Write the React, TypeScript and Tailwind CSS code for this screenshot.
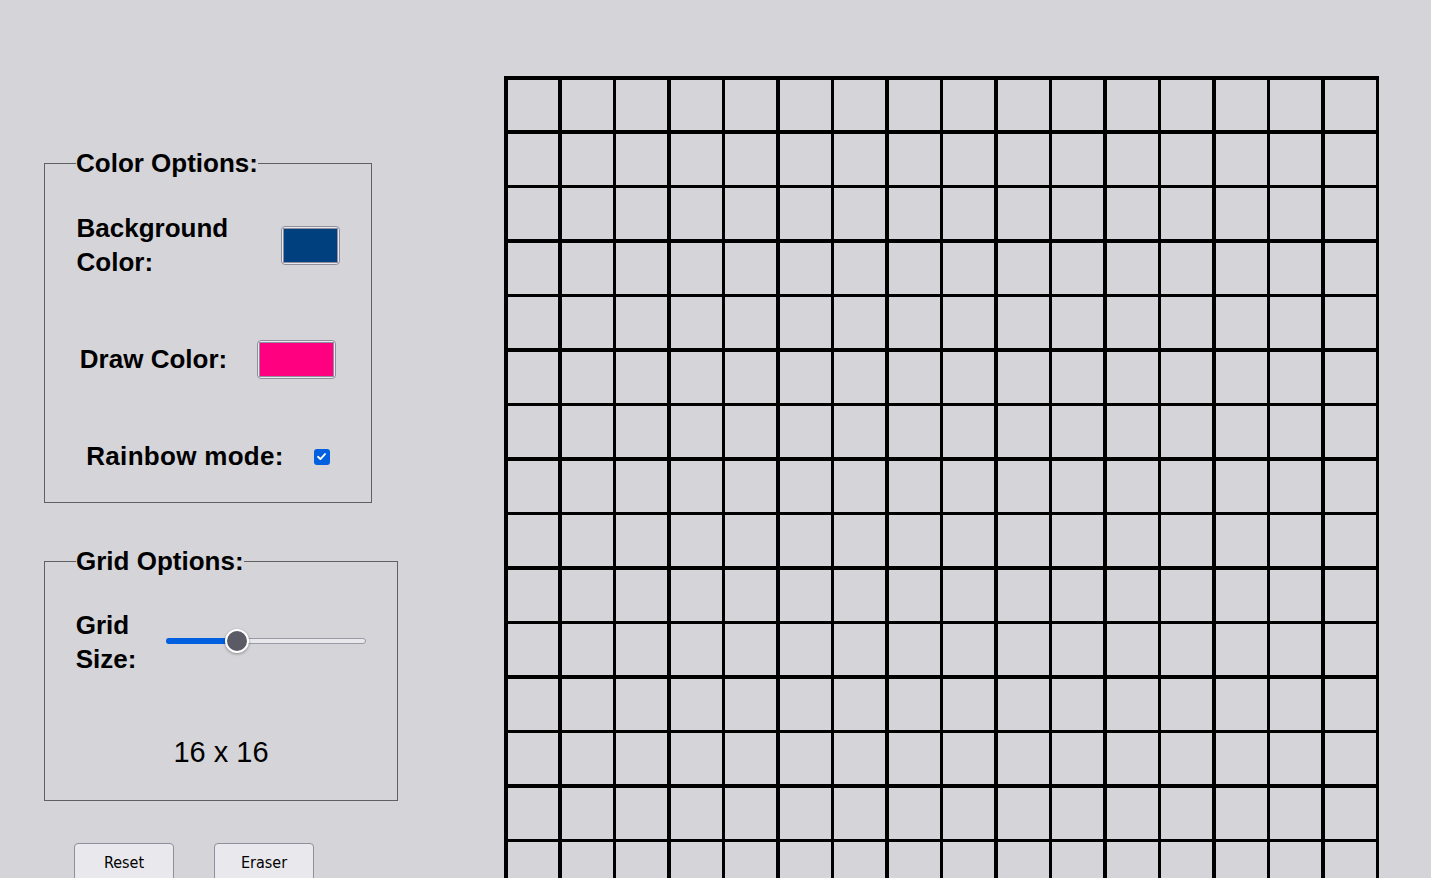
import React from "react";

const font = { fontFamily: '"Liberation Sans", Arial, sans-serif' };

function Swatch({ color, w }: { color: string; w: string }) {
  return (
    <div className={`${w} h-[39px] rounded-[4px] border border-[#8f8f9d] bg-[#e9e9ed] p-[1px] shrink-0`}>
      <div className="w-full h-full border border-[#8f8f9d]" style={{ background: color }} />
    </div>
  );
}

export default function App() {
  const cells = Array.from({ length: 256 });
  return (
    <div className="w-full min-h-screen bg-[#d4d4d9] text-black overflow-hidden" style={font}>
      <div className="flex items-start">
        {/* Left panel */}
        <div className="pl-[44px] pt-[148px] flex flex-col">
          <fieldset className="w-[328px] h-[355px] border border-[#606060] px-[31px]">
            <legend className="text-[26px] leading-[30px] font-bold">Color Options:</legend>
            <div className="flex flex-col -mx-[31px]">
              <div className="mt-[33px] flex justify-center items-center gap-[30px]">
                <div className="w-[174px] text-[26px] leading-[34px] font-bold">
                  Background
                  <br />
                  Color:
                </div>
                <Swatch color="#00407f" w="w-[59px]" />
              </div>
              <div className="mt-[61px] flex justify-center items-center gap-[30px]">
                <div className="text-[26px] leading-[33px] font-bold">Draw Color:</div>
                <Swatch color="#ff0080" w="w-[79px]" />
              </div>
              <div className="mt-[61px] flex justify-center items-center gap-[30px]">
                <div className="text-[26px] leading-[33px] font-bold tracking-[0.3px]">Rainbow mode:</div>
                <div className="w-[16px] h-[16px] rounded-[3px] bg-[#0060df] flex items-center justify-center">
                  <svg width="11" height="11" viewBox="0 0 12 12">
                    <path d="M2.2 6.3 L4.8 8.8 L9.8 3.3" fill="none" stroke="white" strokeWidth="2" strokeLinecap="round" strokeLinejoin="round" />
                  </svg>
                </div>
              </div>
            </div>
          </fieldset>

          <fieldset className="mt-[43px] w-[354px] h-[255px] border border-[#606060] px-[31px]">
            <legend className="text-[26px] leading-[30px] font-bold">Grid Options:</legend>
            <div className="flex flex-col -mx-[31px]">
              <div className="mt-[32px] flex justify-center items-center gap-[30px]">
                <div className="text-[26px] leading-[34px] font-bold">
                  Grid
                  <br />
                  Size:
                </div>
                <div className="relative w-[200px] h-[24px] mt-[-3px]">
                  <div className="absolute left-0 right-0 top-[9px] h-[6px] rounded-full bg-[#e9e9ed] border border-[#9a9aa6]" />
                  <div className="absolute left-0 w-[66px] top-[9px] h-[6px] rounded-l-full bg-[#0060df]" />
                  <div className="absolute left-[59px] top-0 w-[24px] h-[24px] rounded-full bg-[#5b5b66] border-2 border-white shadow-[0_1px_3px_rgba(0,0,0,0.35)]" />
                </div>
              </div>
              <div className="mt-[59px] text-center text-[29px] leading-[34px]">16 x 16</div>
            </div>
          </fieldset>

          <div className="mt-[42px] flex gap-[40px] pl-[30px]">
            <button className="w-[100px] h-[42px] rounded-[4px] border border-[#8f8f9d] bg-[#e9e9ed] text-[16px] pb-[2px]" style={{ fontFamily: '"DejaVu Sans Condensed", "Liberation Sans", sans-serif' }}>
              Reset
            </button>
            <button className="w-[100px] h-[42px] rounded-[4px] border border-[#8f8f9d] bg-[#e9e9ed] text-[16px] pb-[2px]" style={{ fontFamily: '"DejaVu Sans Condensed", "Liberation Sans", sans-serif' }}>
              Eraser
            </button>
          </div>
        </div>

        {/* Grid */}
        <div className="ml-[106px] mt-[76px] w-[875px] h-[875px] shrink-0 bg-black p-[3.5px] grid grid-cols-16 grid-rows-16 gap-[3.5px]">
          {cells.map((_, i) => (
            <div key={i} className="bg-[#d4d4d9]" />
          ))}
        </div>
      </div>
    </div>
  );
}
